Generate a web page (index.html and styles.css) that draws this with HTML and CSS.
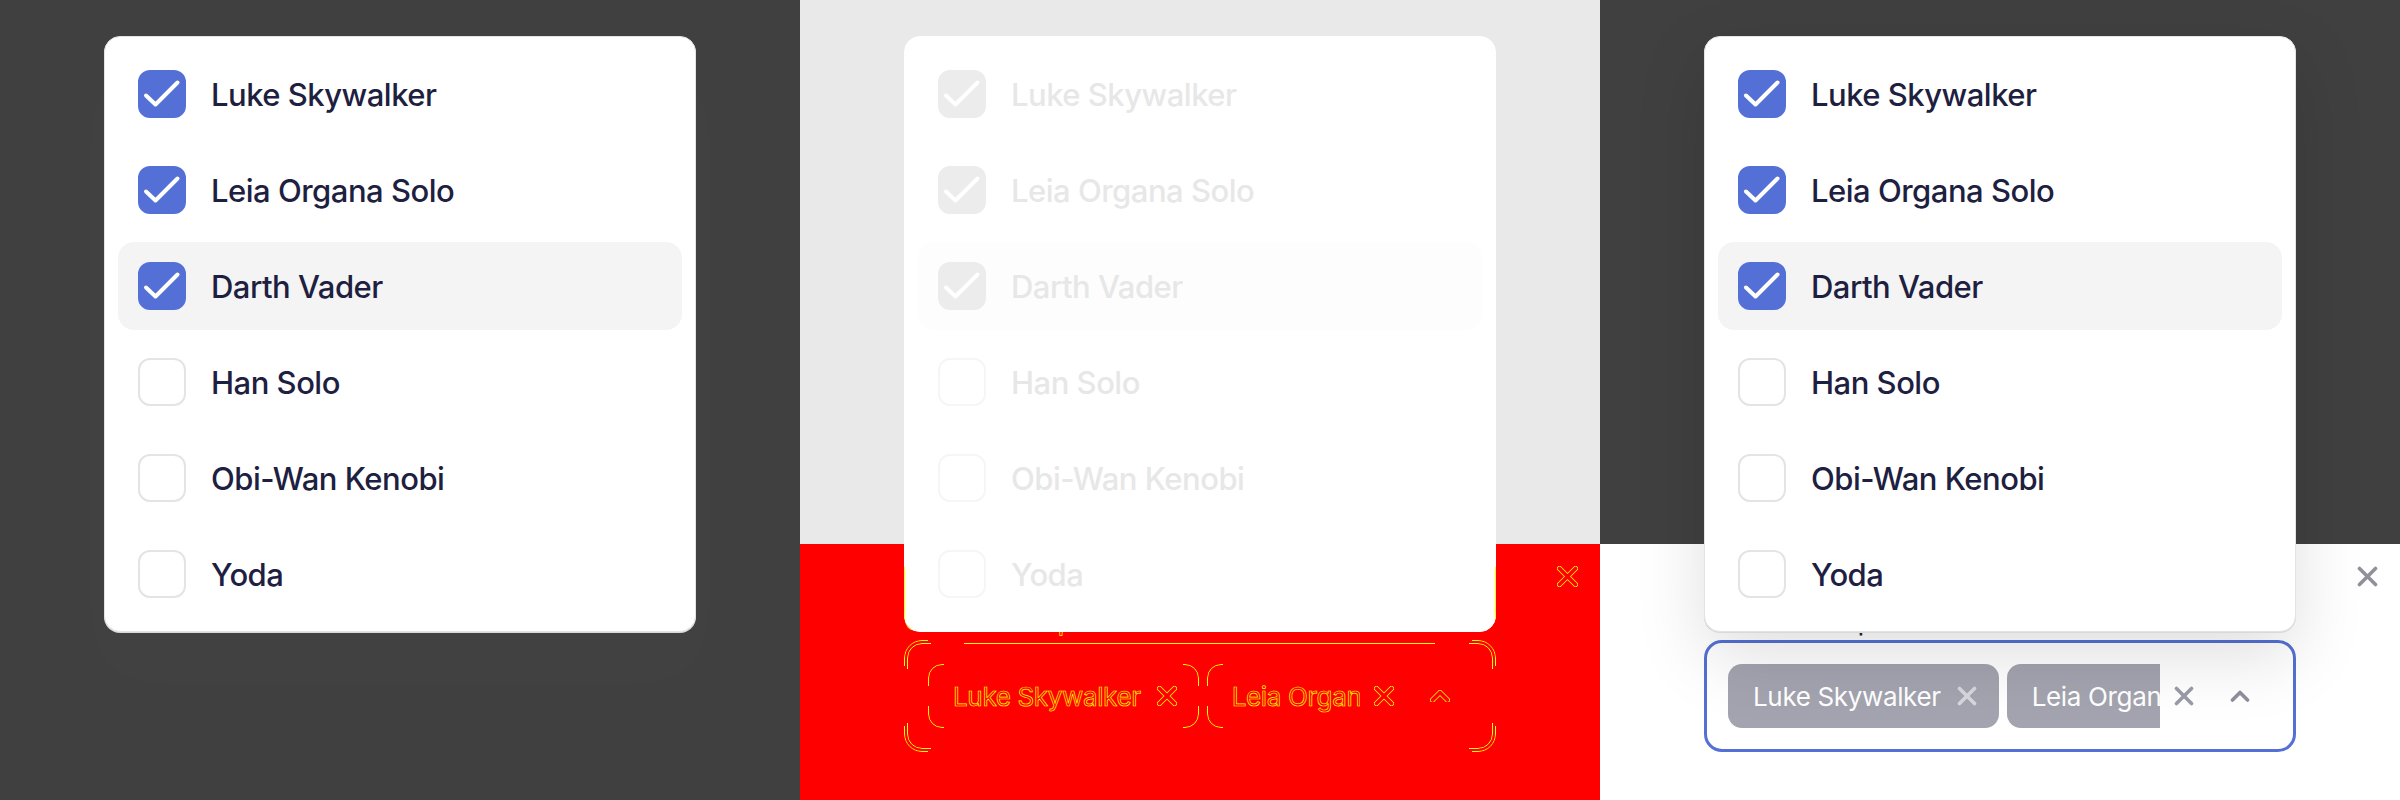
FILE: index.html
```html
<!DOCTYPE html>
<html lang="en">
<head>
<meta charset="utf-8">
<title>Multi select</title>
<link rel="stylesheet" href="styles.css">
</head>
<body>
<div class="stage">

  <!-- Panel A: expected -->
  <section class="panel panel-a">
    <div class="menu">
      <div class="opt"><span class="box on"><svg viewBox="0 0 48 48"><path d="M8 25.5 L17.5 34.5 L39.5 12.5"/></svg></span><span class="name">Luke Skywalker</span></div>
      <div class="opt"><span class="box on"><svg viewBox="0 0 48 48"><path d="M8 25.5 L17.5 34.5 L39.5 12.5"/></svg></span><span class="name">Leia Organa Solo</span></div>
      <div class="opt hover"><span class="box on"><svg viewBox="0 0 48 48"><path d="M8 25.5 L17.5 34.5 L39.5 12.5"/></svg></span><span class="name">Darth Vader</span></div>
      <div class="opt"><span class="box"></span><span class="name">Han Solo</span></div>
      <div class="opt"><span class="box"></span><span class="name">Obi-Wan Kenobi</span></div>
      <div class="opt"><span class="box"></span><span class="name">Yoda</span></div>
    </div>
  </section>

  <!-- Panel B: diff -->
  <section class="panel panel-b">
    <div class="sheet diff">
      <div class="sheet-head">
        <svg class="ic close" viewBox="0 0 21 21"><path class="o" d="M2.5 2.5 L18.5 18.5 M18.5 2.5 L2.5 18.5"/><path class="i" d="M2.5 2.5 L18.5 18.5 M18.5 2.5 L2.5 18.5"/></svg>
      </div>
      <div class="label">Characters picked</div>
      <div class="field">
        <div class="chips">
          <span class="chip"><span class="chip-text">Luke Skywalker</span><svg class="ic chip-x" viewBox="0 0 20 20"><path class="o" d="M2.5 2.5 L17.5 17.5 M17.5 2.5 L2.5 17.5"/><path class="i" d="M2.5 2.5 L17.5 17.5 M17.5 2.5 L2.5 17.5"/></svg></span>
          <span class="chip"><span class="chip-text">Leia Organa Solo</span><svg class="ic chip-x" viewBox="0 0 20 20"><path class="o" d="M2.5 2.5 L17.5 17.5 M17.5 2.5 L2.5 17.5"/><path class="i" d="M2.5 2.5 L17.5 17.5 M17.5 2.5 L2.5 17.5"/></svg></span>
        </div>
        <svg class="ic clear" viewBox="0 0 20 20"><path class="o" d="M2.5 2.5 L17.5 17.5 M17.5 2.5 L2.5 17.5"/><path class="i" d="M2.5 2.5 L17.5 17.5 M17.5 2.5 L2.5 17.5"/></svg>
        <svg class="ic chev" viewBox="0 0 20 12"><path class="o" d="M2.5 10 L10 2.5 L17.5 10"/><path class="i" d="M2.5 10 L10 2.5 L17.5 10"/></svg>
      </div>
    </div>
    <div class="menu faded">
      <div class="opt"><span class="box on"><svg viewBox="0 0 48 48"><path d="M8 25.5 L17.5 34.5 L39.5 12.5"/></svg></span><span class="name">Luke Skywalker</span></div>
      <div class="opt"><span class="box on"><svg viewBox="0 0 48 48"><path d="M8 25.5 L17.5 34.5 L39.5 12.5"/></svg></span><span class="name">Leia Organa Solo</span></div>
      <div class="opt hover"><span class="box on"><svg viewBox="0 0 48 48"><path d="M8 25.5 L17.5 34.5 L39.5 12.5"/></svg></span><span class="name">Darth Vader</span></div>
      <div class="opt"><span class="box"></span><span class="name">Han Solo</span></div>
      <div class="opt"><span class="box"></span><span class="name">Obi-Wan Kenobi</span></div>
      <div class="opt"><span class="box"></span><span class="name">Yoda</span></div>
    </div>
  </section>

  <!-- Panel C: actual -->
  <section class="panel panel-c">
    <div class="sheet">
      <div class="sheet-head">
        <svg class="ic close" viewBox="0 0 21 21"><path class="o" d="M2.5 2.5 L18.5 18.5 M18.5 2.5 L2.5 18.5"/><path class="i" d="M2.5 2.5 L18.5 18.5 M18.5 2.5 L2.5 18.5"/></svg>
      </div>
      <div class="label">Characters picked</div>
      <div class="field">
        <div class="chips">
          <span class="chip"><span class="chip-text">Luke Skywalker</span><svg class="ic chip-x" viewBox="0 0 20 20"><path class="o" d="M2.5 2.5 L17.5 17.5 M17.5 2.5 L2.5 17.5"/><path class="i" d="M2.5 2.5 L17.5 17.5 M17.5 2.5 L2.5 17.5"/></svg></span>
          <span class="chip"><span class="chip-text">Leia Organa Solo</span><svg class="ic chip-x" viewBox="0 0 20 20"><path class="o" d="M2.5 2.5 L17.5 17.5 M17.5 2.5 L2.5 17.5"/><path class="i" d="M2.5 2.5 L17.5 17.5 M17.5 2.5 L2.5 17.5"/></svg></span>
        </div>
        <svg class="ic clear" viewBox="0 0 20 20"><path class="o" d="M2.5 2.5 L17.5 17.5 M17.5 2.5 L2.5 17.5"/><path class="i" d="M2.5 2.5 L17.5 17.5 M17.5 2.5 L2.5 17.5"/></svg>
        <svg class="ic chev" viewBox="0 0 20 12"><path class="o" d="M2.5 10 L10 2.5 L17.5 10"/><path class="i" d="M2.5 10 L10 2.5 L17.5 10"/></svg>
      </div>
    </div>
    <div class="menu">
      <div class="opt"><span class="box on"><svg viewBox="0 0 48 48"><path d="M8 25.5 L17.5 34.5 L39.5 12.5"/></svg></span><span class="name">Luke Skywalker</span></div>
      <div class="opt"><span class="box on"><svg viewBox="0 0 48 48"><path d="M8 25.5 L17.5 34.5 L39.5 12.5"/></svg></span><span class="name">Leia Organa Solo</span></div>
      <div class="opt hover"><span class="box on"><svg viewBox="0 0 48 48"><path d="M8 25.5 L17.5 34.5 L39.5 12.5"/></svg></span><span class="name">Darth Vader</span></div>
      <div class="opt"><span class="box"></span><span class="name">Han Solo</span></div>
      <div class="opt"><span class="box"></span><span class="name">Obi-Wan Kenobi</span></div>
      <div class="opt"><span class="box"></span><span class="name">Yoda</span></div>
    </div>
  </section>

</div>
</body>
</html>
```
FILE: styles.css
```css
* { box-sizing: border-box; }

html, body {
  margin: 0;
  padding: 0;
  background: #404040;
}

body {
  font-family: Inter, "Noto Sans", "DejaVu Sans", sans-serif;
  color: #1d2040;
}

.stage {
  display: flex;
  width: 2400px;
  height: 800px;
}

.panel {
  position: relative;
  width: 800px;
  height: 800px;
  flex: 0 0 800px;
  display: flex;
  flex-direction: column;
  overflow: hidden;
}

.panel-a { background: #404040; }
.panel-b { background: #e9e9e9; }
.panel-c { background: #404040; }

/* ---------- dropdown menu ---------- */
.menu {
  position: absolute;
  z-index: 2;
  top: 36px;
  left: 104px;
  width: 592px;
  padding: 13px;
  display: flex;
  flex-direction: column;
  gap: 8px;
  background: #fff;
  border: 1px solid #e3e3e3;
  border-radius: 16px;
  box-shadow: 0 1px 0 #d9d9d9, 0 24px 70px rgba(0, 0, 0, 0.13);
}

.panel-a .menu {
  box-shadow: 0 1px 0 #d9d9d9, 0 40px 80px 30px rgba(255, 255, 255, 0.012);
}

.opt {
  height: 88px;
  display: flex;
  align-items: center;
  gap: 25px;
  padding-left: 20px;
  border-radius: 16px;
  font-size: 31px;
  font-weight: 500;
  letter-spacing: -0.5px;
  color: #1d2040;
}

.opt.hover { background: #f4f4f4; }

.box {
  width: 48px;
  height: 48px;
  flex: 0 0 48px;
  border: 2px solid #e4e4e4;
  border-radius: 12px;
  display: flex;
  align-items: center;
  justify-content: center;
  background: #fff;
}

.box.on {
  background: #5470d6;
  border-color: #5470d6;
}

.box svg {
  width: 48px;
  height: 48px;
  flex: 0 0 48px;
  fill: none;
  stroke: #fff;
  stroke-width: 4;
  stroke-linecap: round;
  stroke-linejoin: round;
}

/* faded menu in the diff panel */
.menu.faded {
  border-color: #fff;
  box-shadow: none;
}
.menu.faded .opt { color: #e7e7e7; }
.menu.faded .opt.hover { background: #fdfdfd; }
.menu.faded .box { border-color: #f6f6f6; background: transparent; }
.menu.faded .box.on { background: #ececec; border-color: #ececec; }
.menu.faded::after {
  content: "";
  position: absolute;
  left: -1px;
  right: -1px;
  bottom: 12px;
  height: 52px;
  border-left: 1px solid #ffff00;
  border-right: 1px solid #ffff00;
}

/* ---------- bottom sheet with field ---------- */
.sheet {
  margin-top: 544px;
  flex: 1;
  background: #fff;
  display: flex;
  flex-direction: column;
}

.sheet-head {
  height: 60px;
  display: flex;
  justify-content: flex-end;
  align-items: flex-start;
  padding: 22px 22px 0 0;
}

.label {
  margin-left: 104px;
  font-size: 28px;
  line-height: 32px;
  color: #1d2040;
  white-space: nowrap;
}

.field {
  position: relative;
  margin: 4px 0 0 104px;
  width: 592px;
  height: 112px;
  border: 3px solid #5470d6;
  border-radius: 18px;
  padding: 0 43px 0 21px;
  display: flex;
  align-items: center;
}

.chips {
  flex: 0 0 432px;
  width: 432px;
  display: flex;
  gap: 8px;
  overflow: hidden;
}

.chip {
  position: relative;
  flex: 0 0 auto;
  height: 64px;
  display: flex;
  align-items: center;
  gap: 16px;
  padding: 0 22px 0 25px;
  border-radius: 14px;
  background: #a3a4af;
  color: #fff;
  font-size: 26px;
  letter-spacing: -0.35px;
  white-space: nowrap;
}

.ic {
  fill: none;
  stroke-linecap: round;
  stroke-linejoin: round;
  flex: 0 0 auto;
}
.ic .o { stroke: none; }
.ic .i { stroke: currentColor; stroke-width: 3.6; }

.chip-x { width: 20px; height: 20px; color: #d7d8de; }
.clear { width: 20px; height: 20px; margin-left: 14px; color: #9a9ba6; }
.chev { width: 20px; height: 12px; margin-left: 36px; color: #8e8f9a; }
.close { width: 21px; height: 21px; color: #8f909b; }

/* ---------- diff rendering (middle panel) ---------- */
.sheet.diff { background: #ff0000; }

.diff .label,
.diff .chip-text {
  color: #ff0000;
  -webkit-text-stroke: 0.7px #ffff00;
}

.diff .ic .o { stroke: #ffff00; stroke-width: 5.2; }
.diff .ic .i { stroke: #ff0000; stroke-width: 3.6; }

.diff .field {
  border-color: transparent;
  background: linear-gradient(#ffff00, #ffff00) no-repeat 57px 0 / 471px 1px;
}

.diff .field::before,
.diff .field::after,
.diff .chip::before {
  content: "";
  position: absolute;
  border: 1px solid #ffff00;
  -webkit-mask:
    linear-gradient(#000 0 0) left top / 24px 26px no-repeat,
    linear-gradient(#000 0 0) right top / 24px 26px no-repeat,
    linear-gradient(#000 0 0) left bottom / 24px 26px no-repeat,
    linear-gradient(#000 0 0) right bottom / 24px 26px no-repeat;
  mask:
    linear-gradient(#000 0 0) left top / 24px 26px no-repeat,
    linear-gradient(#000 0 0) right top / 24px 26px no-repeat,
    linear-gradient(#000 0 0) left bottom / 24px 26px no-repeat,
    linear-gradient(#000 0 0) right bottom / 24px 26px no-repeat;
}

.diff .field::before {
  inset: -3px;
  border-radius: 18px;
}

.diff .field::after {
  inset: 0;
  border-radius: 15px;
}

.diff .chip {
  background: transparent;
}

.diff .chip::before {
  inset: 0;
  border-radius: 14px;
  -webkit-mask:
    linear-gradient(#000 0 0) left top / 16px 22px no-repeat,
    linear-gradient(#000 0 0) right top / 16px 22px no-repeat,
    linear-gradient(#000 0 0) left bottom / 16px 22px no-repeat,
    linear-gradient(#000 0 0) right bottom / 16px 22px no-repeat;
  mask:
    linear-gradient(#000 0 0) left top / 16px 22px no-repeat,
    linear-gradient(#000 0 0) right top / 16px 22px no-repeat,
    linear-gradient(#000 0 0) left bottom / 16px 22px no-repeat,
    linear-gradient(#000 0 0) right bottom / 16px 22px no-repeat;
}
```
